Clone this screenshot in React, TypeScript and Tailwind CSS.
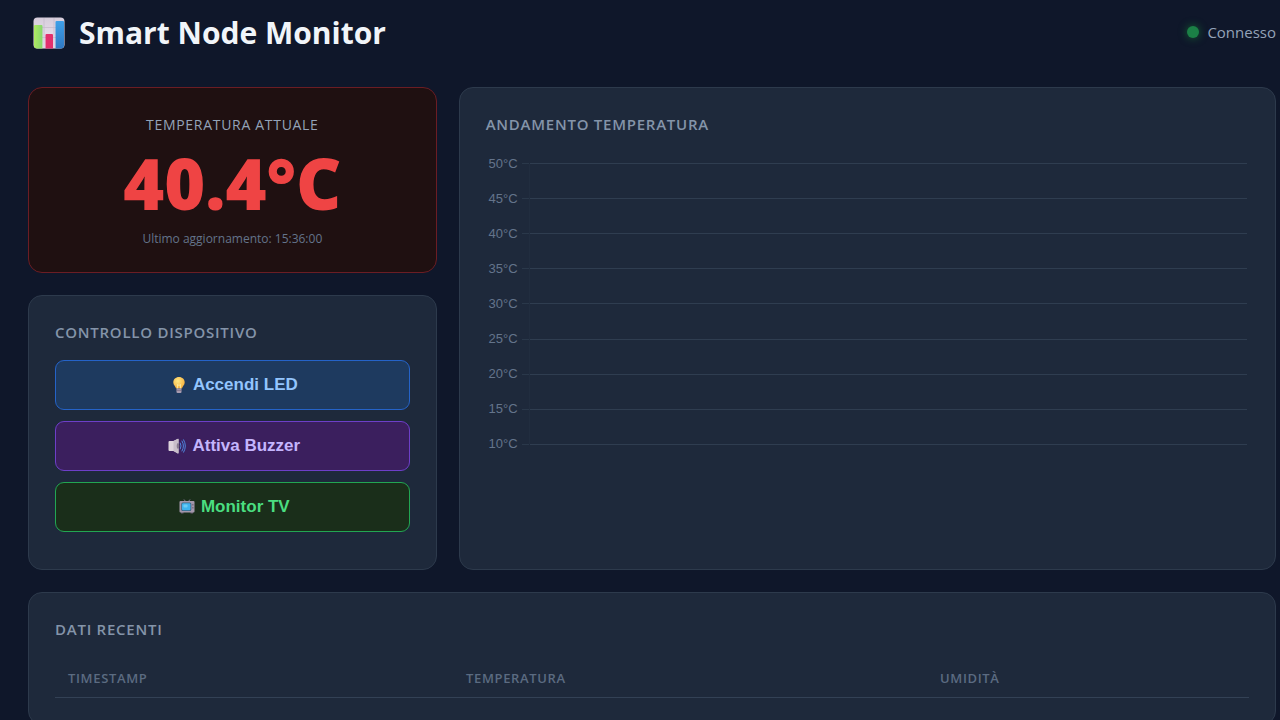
import type { ReactNode } from "react";

/**
 * Smart Node Monitor: dashboard temperatura e controllo dispositivo
 */

const TICKS = [50, 45, 40, 35, 30, 25, 20, 15, 10];

function ChartIcon() {
  return (
    <svg viewBox="0 0 32 32" className="size-8 shrink-0" aria-hidden="true">
      <defs>
        <linearGradient id="paper" x1="0" y1="0" x2="0" y2="1">
          <stop offset="0" stopColor="#d6cddb" />
          <stop offset="1" stopColor="#f2e6f3" />
        </linearGradient>
        <linearGradient id="green" x1="0" y1="0" x2="1" y2="0">
          <stop offset="0" stopColor="#b0ea62" />
          <stop offset="1" stopColor="#86d76d" />
        </linearGradient>
        <linearGradient id="blue" x1="0" y1="0" x2="0" y2="1">
          <stop offset="0" stopColor="#3fa0e8" />
          <stop offset="1" stopColor="#2f79c4" />
        </linearGradient>
      </defs>
      <rect x="0.5" y="0.5" width="31" height="31" rx="4" fill="url(#paper)" />
      <path d="M1 10.5H31M1 20.5H31M11 1V31M21 1V31" stroke="#c6bbcd" strokeWidth="0.8" />
      <path d="M1 9q0-1 1-1h6.500q1 0 1 1V31.500H4q-3 0-3-3z" fill="url(#green)" />
      <path d="M12.500 18q0-1 1-1h5.500q1 0 1 1V31.500H12.500z" fill="#e2306d" />
      <path d="M22.500 5q0-1 1-1h6.500q1 0 1 1V28.500q0 3-3 3h-5.500z" fill="url(#blue)" />
    </svg>
  );
}

function BulbIcon() {
  return (
    <svg viewBox="0 0 16 16" className="size-4" aria-hidden="true">
      <defs>
        <radialGradient id="glass" cx="0.4" cy="0.35" r="0.7">
          <stop offset="0" stopColor="#ffe884" />
          <stop offset="1" stopColor="#f6ad3a" />
        </radialGradient>
      </defs>
      <path d="M8 0C4.700 0 2.300 2.400 2.300 5.400c0 2.500 2.200 3.700 2.800 6.100h5.800c.6-2.400 2.800-3.600 2.800-6.100C13.700 2.400 11.300 0 8 0z" fill="url(#glass)" />
      <path d="M6.500 11.500V7.500L8 8.500l1.500-1v4" fill="none" stroke="#fff0a8" strokeWidth="0.8" />
      <path d="M5.500 11.500h5v3.500q0 1-1 1h-3q-1 0-1-1z" fill="#a99cb0" />
      <path d="M5.500 13.300h5" stroke="#6f6078" strokeWidth="0.7" />
    </svg>
  );
}

function SpeakerIcon() {
  return (
    <svg viewBox="0 0 18 16" className="h-4 w-[18px]" aria-hidden="true">
      <path d="M1.500 3h4L9.500 1q1-.7 1 .6v13q0 1.300-1 .6L5.500 13h-4Q.5 13 .5 12V4q0-1 1-1z" fill="#ddd3dc" />
      <path d="M5.500 3L9.500 1q1-.7 1 .6v13q0 1.300-1 .6L5.500 13z" fill="#c8bdc9" />
      <ellipse cx="10" cy="8" rx="1.300" ry="3" fill="#85798e" />
      <path d="M12.300 5q1.600 3 0 6M14 3q3 5 0 10M15.600 1.800q3.600 6.200 0 12.400" fill="none" stroke="#4f86dc" strokeWidth="1" strokeLinecap="round" />
    </svg>
  );
}

function TvIcon() {
  return (
    <svg viewBox="0 0 16 16" className="size-4" aria-hidden="true">
      <path d="M5 .5L7 3M11 .5L9 3" stroke="#8b7c98" strokeWidth="1" />
      <path d="M2 13h2.500v1.500H2zM11.500 13H14v1.500h-2.500z" fill="#65586e" />
      <rect x="0.500" y="2" width="15" height="11.500" rx="1" fill="#a397ab" />
      <rect x="2.300" y="3.500" width="10" height="8.500" rx="1.500" fill="#38627f" />
      <rect x="3" y="4.200" width="8.500" height="7" rx="1.200" fill="#3fb3ef" />
      <rect x="4.500" y="5.500" width="4" height="3" rx="0.800" fill="#6dcbf5" />
      <path d="M13.900 5v1.500M13.900 8v1.500" stroke="#665a70" strokeWidth="1" />
    </svg>
  );
}

const ACTIONS: { label: string; icon: ReactNode; style: string }[] = [
  { label: "Accendi LED", icon: <BulbIcon />, style: "bg-[#1e3a5f] border-[#2563c8] text-[#93c5fd]" },
  { label: "Attiva Buzzer", icon: <SpeakerIcon />, style: "bg-[#3b1f5e] border-[#6d3fc8] text-[#c4b5fd]" },
  { label: "Monitor TV", icon: <TvIcon />, style: "bg-[#1a2e1a] border-[#22a652] text-[#4ade80]" },
];

function Card({ title, className = "", children }: { title: string; className?: string; children: ReactNode }) {
  return (
    <section className={`rounded-[14px] border border-[#2d3a4c] bg-[#1e293b] px-[26px] pt-[25px] pb-[26px] ${className}`}>
      <h2 className="text-[15px] leading-[22px] font-semibold tracking-wider uppercase text-[#8494a9]">{title}</h2>
      {children}
    </section>
  );
}

function axisSegment(i: number) {
  if (i === 0) return "h-1/2 self-end";
  if (i === TICKS.length - 1) return "h-1/2 self-start";
  return "self-stretch";
}

function TemperatureChart() {
  return (
    <div className="mt-[11px] flex h-[316px] flex-col" role="img" aria-label="Grafico temperatura">
      {TICKS.map((t, i) => (
        <div key={t} className="flex flex-1 items-center pr-[2px] font-['Liberation_Sans',sans-serif] text-[13px] leading-4 text-[#64748b]">
          <span className="w-8 text-right">{t}°C</span>
          <span className="ml-1 h-px w-[7px] bg-[#2a384a]" />
          <span className={`w-px bg-[#212d3f] ${axisSegment(i)}`} />
          <span className="h-px flex-1 bg-[#2f3d50]" />
        </div>
      ))}
    </div>
  );
}

export default function App() {
  return (
    <div className="min-h-screen bg-[#0f172a] pt-3 pr-1 pb-7 pl-7 font-['Open_Sans','Noto_Sans',sans-serif] text-[#f1f5f9]">
      <header className="flex h-[42px] items-center justify-between pl-[5px]">
        <h1 className="flex items-center gap-[14px] text-[30px] leading-[42px] font-bold">
          <ChartIcon />
          Smart Node Monitor
        </h1>
        <div className="flex items-center gap-2 pb-[2px] text-[15px] leading-5 text-[#94a3b8]">
          <span className="size-3 rounded-full bg-[#1b8046] shadow-[0_0_8px_#166534]" />
          Connesso
        </div>
      </header>

      <main className="mt-[33px] grid grid-cols-[1fr_2fr] gap-[22px]">
        <div className="flex flex-col gap-[22px]">
          <section className="flex h-[186px] flex-col items-center rounded-[14px] border border-[#6b1d24] bg-[#1f1011] pt-[25px] text-center">
            <h2 className="text-[14px] leading-6 uppercase tracking-wider text-[#94a3b8]">Temperatura attuale</h2>
            <div className="mt-[6px] text-[70px] leading-[80px] font-black text-[#ef4444] font-['Noto_Sans',sans-serif]">40.4°C</div>
            <p className="mt-[6px] text-[12px] leading-5 text-[#64748b]">Ultimo aggiornamento: 15:36:00</p>
          </section>

          <Card title="Controllo dispositivo" className="h-[275px]">
            <div className="mt-[17px] flex flex-col gap-[11px]">
              {ACTIONS.map((a) => (
                <button
                  key={a.label}
                  type="button"
                  className={`flex h-[50px] items-center justify-center gap-[6px] rounded-[9px] border pl-1 font-['Liberation_Sans',sans-serif] text-[17px] font-bold ${a.style}`}
                >
                  {a.icon}
                  {a.label}
                </button>
              ))}
            </div>
          </Card>
        </div>

        <Card title="Andamento temperatura">
          <TemperatureChart />
        </Card>

        <Card title="Dati recenti" className="col-span-2">
          <table className="mt-[19px] w-full text-left">
            <thead>
              <tr className="border-b border-[#334155] text-[13px] leading-5 uppercase tracking-wider text-[#5b6b81]">
                <th className="w-1/3 px-[13px] py-[9px] font-semibold">Timestamp</th>
                <th className="w-[397px] px-[13px] py-[9px] font-semibold md:w-[39.7%]">Temperatura</th>
                <th className="px-[13px] py-[9px] font-semibold">Umidità</th>
              </tr>
            </thead>
            <tbody />
          </table>
        </Card>
      </main>
    </div>
  );
}
